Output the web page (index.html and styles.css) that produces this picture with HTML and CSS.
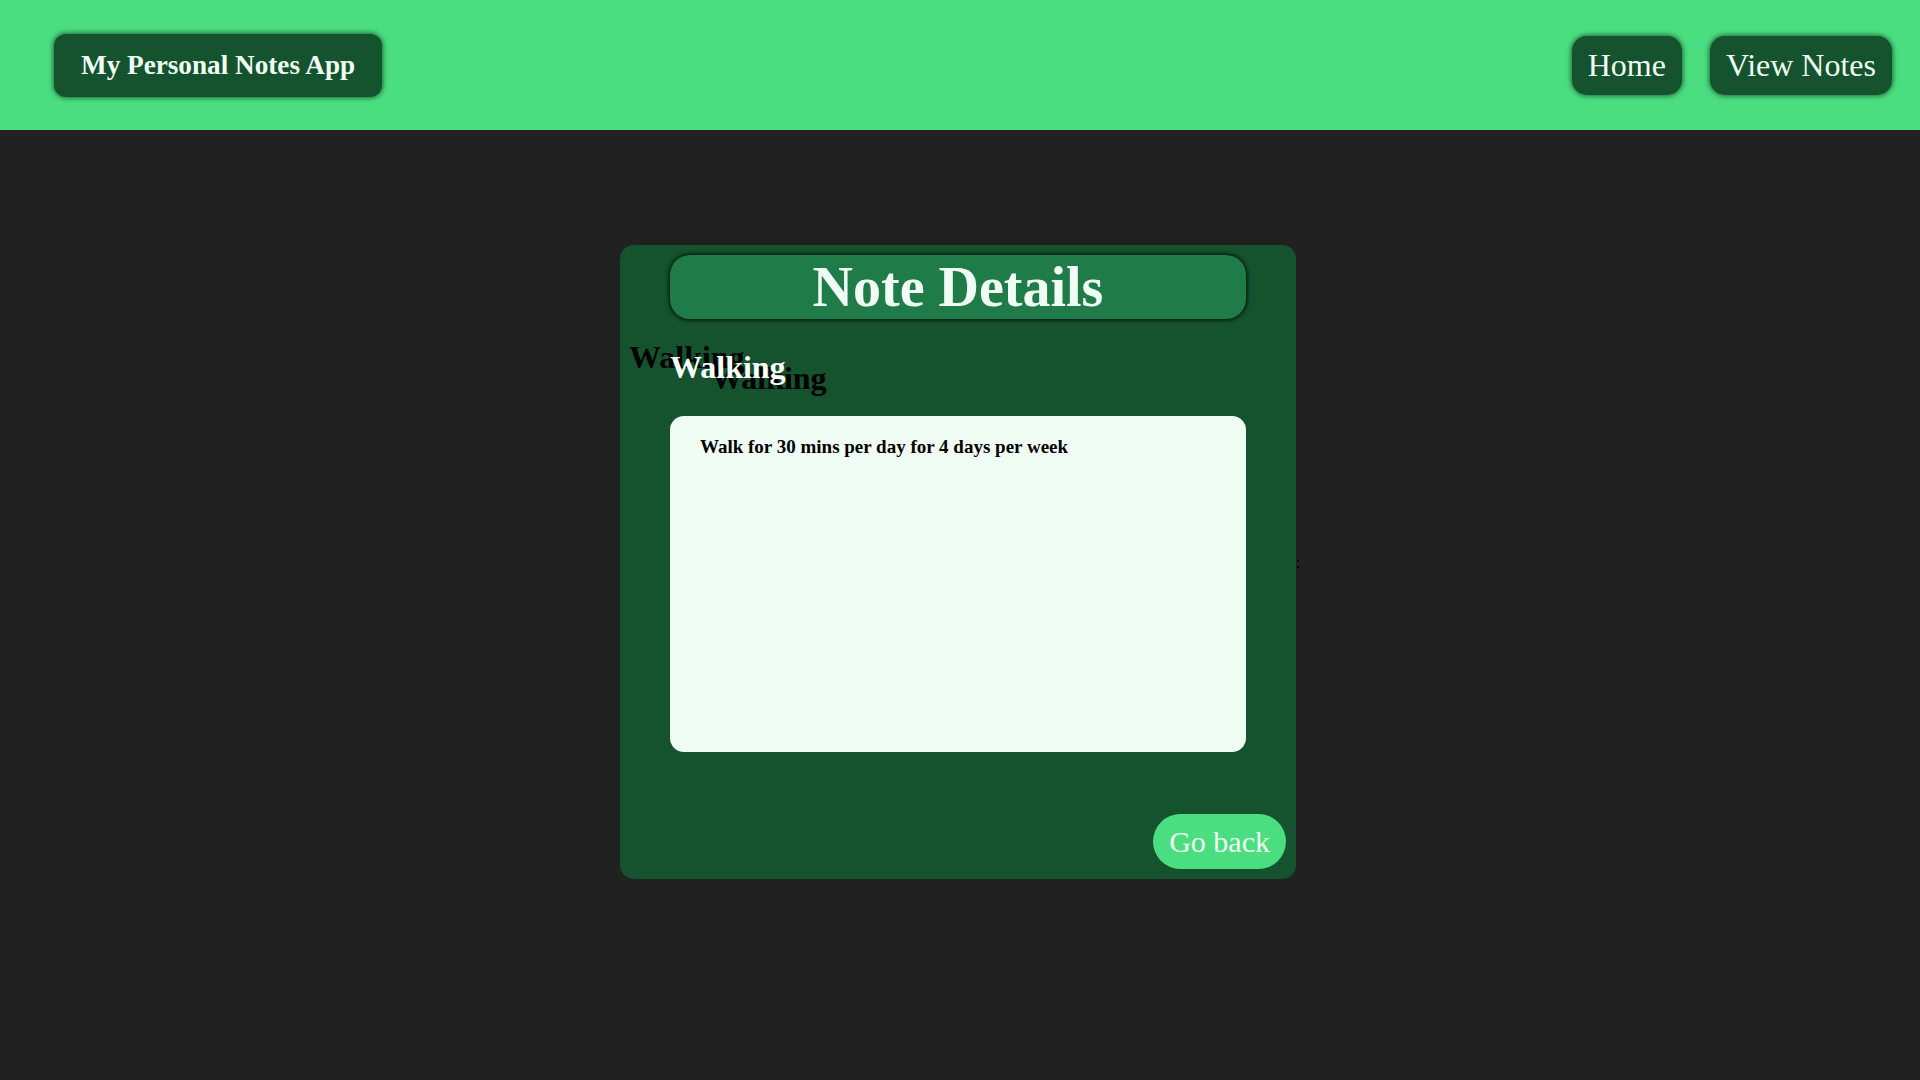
FILE: index.html
```html
<!DOCTYPE html>
<html lang="en">
<head>
<meta charset="utf-8">
<title>My Personal Notes App</title>
<link rel="stylesheet" href="styles.css">
</head>
<body>
<header class="topbar">
  <a class="brand" href="#">My Personal Notes App</a>
  <nav class="nav">
    <a class="nav-btn" href="#">Home</a>
    <a class="nav-btn" href="#">View Notes</a>
  </nav>
</header>
<main class="page">
  <section class="card">
    <h1 class="card-title">Note Details</h1>
    <h2 class="note-title">Walking</h2>
    <div class="note-body">Walk for 30 mins per day for 4 days per week</div>
    <div class="card-footer">
      <a class="back-btn" href="#">Go back</a>
    </div>
    <span class="stray"><i></i><i></i></span>
  </section>
</main>
</body>
</html>
```
FILE: styles.css
```css
html, body {
  margin: 0;
  padding: 0;
}
body {
  background: #212121;
  font-family: "Liberation Serif", "Times New Roman", serif;
  min-height: 1080px;
}
a {
  text-decoration: none;
}
.topbar {
  height: 130px;
  background: #4ade80;
  display: flex;
  align-items: center;
  justify-content: space-between;
  padding: 0 28px 0 54px;
  box-sizing: border-box;
}
.brand {
  background: #14532d;
  color: #f0fdf4;
  font-weight: bold;
  font-size: 27.2px;
  line-height: 31px;
  padding: 16px 27px;
  border-radius: 12px;
  box-shadow: 0 0 5px 1px rgba(0, 0, 0, 0.55);
}
.nav {
  display: flex;
  gap: 28px;
}
.nav-btn {
  background: #14532d;
  color: #f0fdf4;
  font-size: 32px;
  line-height: 37px;
  padding: 11px 16px;
  border-radius: 15px;
  box-shadow: 0 0 5px 1px rgba(0, 0, 0, 0.55);
}
.page {
  padding-top: 115px;
}
.card {
  position: relative;
  width: 676px;
  margin-left: calc(50% - 340px);
  box-sizing: border-box;
  background: #14532d;
  border-radius: 14px;
  padding: 10px 10px 10px;
  display: flex;
  flex-direction: column;
}
.card-title {
  margin: 0 40px;
  height: 64px;
  background: #1f7b47;
  border-radius: 20px;
  box-shadow: 0 0 4px 1px rgba(0, 0, 0, 0.85);
  color: #f0fdf4;
  font-size: 56px;
  font-weight: bold;
  line-height: 65px;
  text-align: center;
}
.note-title {
  margin: 29.5px 40px 30.7px;
  color: #ffffff;
  font-size: 32px;
  font-weight: bold;
  line-height: 36.8px;
  text-shadow: -41px -10px 0 #000000, 41px 11px 0 #000000;
}
.note-body {
  margin: 0 40px;
  height: 336px;
  box-sizing: border-box;
  background: #f0fdf4;
  border-radius: 14px;
  padding: 20px 30px;
  color: #000000;
  font-size: 19px;
  font-weight: bold;
}
.card-footer {
  display: flex;
  justify-content: flex-end;
  margin-top: 62px;
}
.back-btn {
  background: #4ade80;
  color: #f0fdf4;
  font-size: 30px;
  line-height: 35px;
  padding: 10px 16px;
  border-radius: 28px;
}
.stray {
  position: absolute;
  left: 677px;
  top: 315px;
  display: flex;
  flex-direction: column;
  gap: 5px;
}
.stray i {
  display: block;
  width: 2px;
  height: 1px;
  background: #000;
}
.stray i + i {
  height: 2px;
}
```
